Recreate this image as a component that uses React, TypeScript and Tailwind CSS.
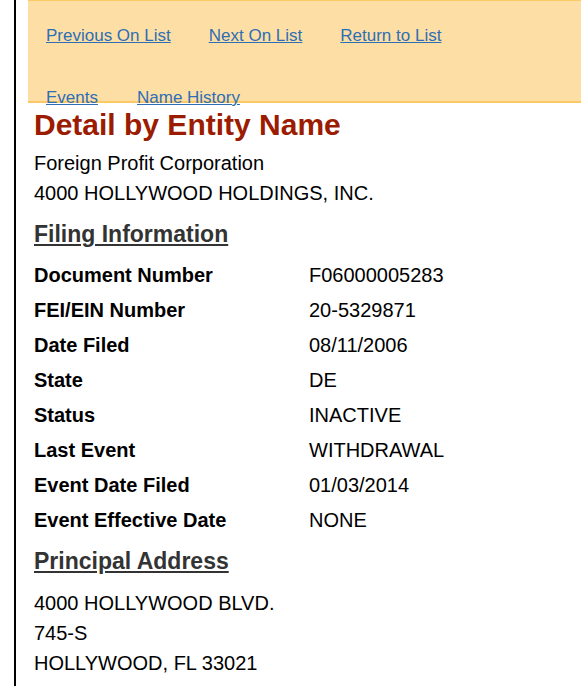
const rows: [string, string][] = [
  ["Document Number", "F06000005283"],
  ["FEI/EIN Number", "20-5329871"],
  ["Date Filed", "08/11/2006"],
  ["State", "DE"],
  ["Status", "INACTIVE"],
  ["Last Event", "WITHDRAWAL"],
  ["Event Date Filed", "01/03/2014"],
  ["Event Effective Date", "NONE"],
];

function NavLink({ children }: { children: React.ReactNode }) {
  return (
    <a href="#" className="text-[#2e6eb5] underline">
      {children}
    </a>
  );
}

export default function App() {
  return (
    <div
      className="min-h-screen bg-white pl-[14px] text-black"
      style={{ fontFamily: '"Liberation Sans", Arial, sans-serif' }}
    >
      <div className="min-h-screen border-l-2 border-black pl-[12px]">
        {/* nav box */}
        <div className="h-[103px] border-t border-b-2 border-[#fcc965] bg-[#fddea5] pl-[18px] pt-[25px] text-[17px] leading-[20px]">
          <div className="flex gap-[38px] whitespace-nowrap">
            <NavLink>Previous On List</NavLink>
            <NavLink>Next On List</NavLink>
            <NavLink>Return to List</NavLink>
          </div>
          <div className="mt-[42px] flex gap-[39px] whitespace-nowrap">
            <NavLink>Events</NavLink>
            <NavLink>Name History</NavLink>
          </div>
        </div>

        <div className="pl-[6px]">
          <h1 className="mt-[5px] text-[30px] font-bold leading-[34px] text-[#9b1c00]">
            Detail by Entity Name
          </h1>
          <div className="mt-[6px] text-[20px] leading-[30px]">
            <p>Foreign Profit Corporation</p>
            <p>4000 HOLLYWOOD HOLDINGS, INC.</p>
          </div>

          <h2 className="mt-[12px] text-[23px] font-bold leading-[28px] text-[#333333] underline">
            Filing Information
          </h2>
          <div className="mt-[10px] text-[20px] leading-[35px]">
            {rows.map(([label, value]) => (
              <div key={label} className="flex">
                <span className="w-[275px] font-bold">{label}</span>
                <span>{value}</span>
              </div>
            ))}
          </div>

          <h2 className="mt-[9px] text-[23px] font-bold leading-[28px] text-[#333333] underline">
            Principal Address
          </h2>
          <div className="mt-[13px] text-[20px] leading-[30px]">
            <p>4000 HOLLYWOOD BLVD.</p>
            <p>745-S</p>
            <p>HOLLYWOOD, FL 33021</p>
          </div>
        </div>
      </div>
    </div>
  );
}
